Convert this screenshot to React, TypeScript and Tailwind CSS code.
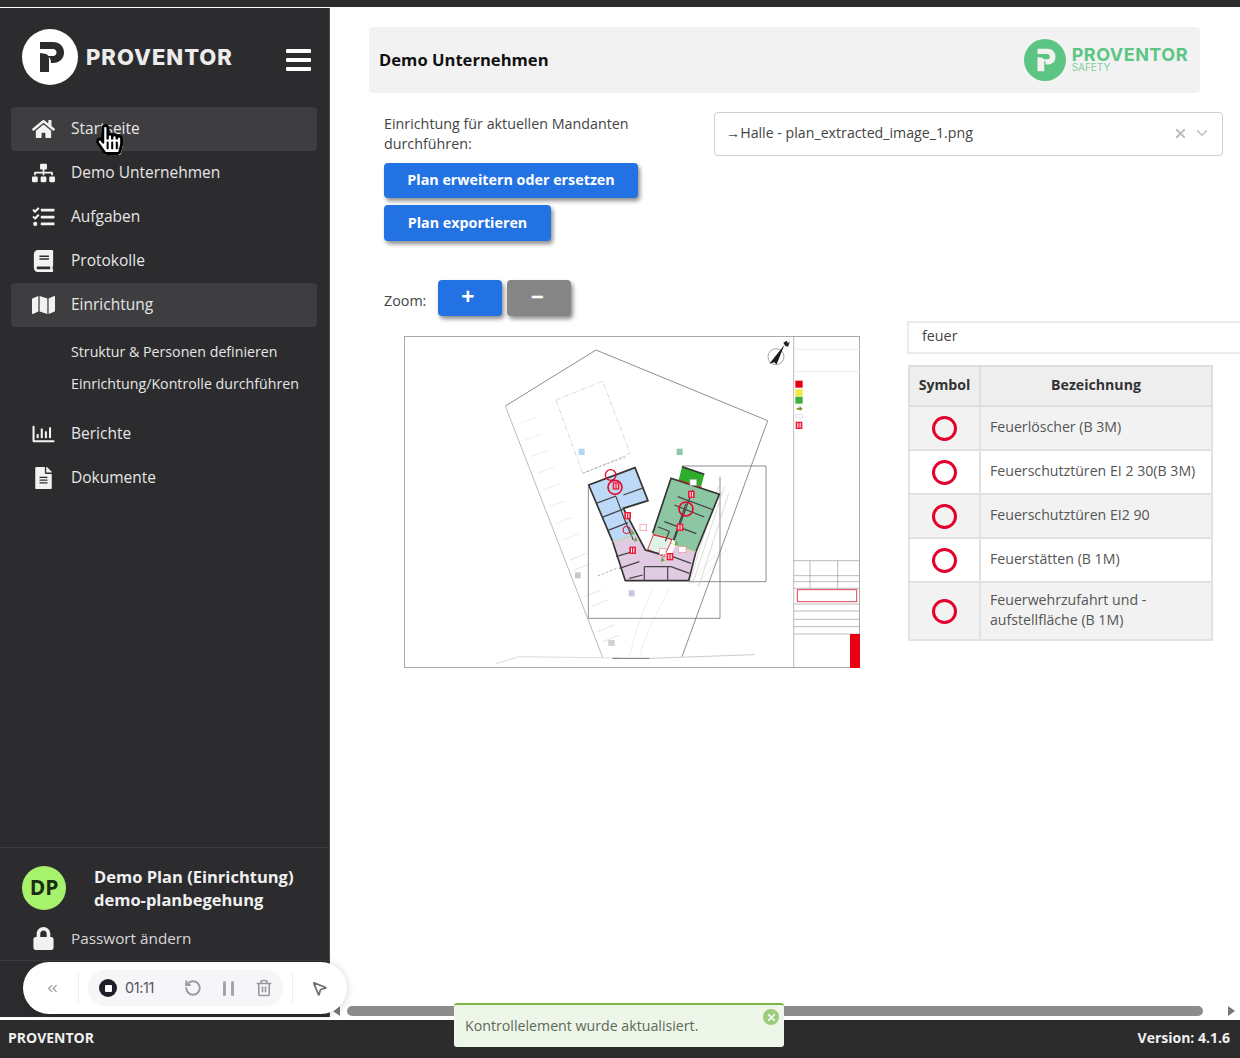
import { ChevronDown, ChevronsLeft, MousePointer2, RotateCcw, Trash2, X } from "lucide-react"
import type { IconType } from "react-icons"
import {
  FaBook,
  FaFileAlt,
  FaHandPointer,
  FaHome,
  FaLock,
  FaMap,
  FaRegChartBar,
  FaRegHandPointer,
  FaSitemap,
  FaTasks,
} from "react-icons/fa"

interface NavItem {
  label: string
  icon: IconType
  active?: boolean
}

const TOP_NAV: NavItem[] = [
  { label: "Startseite", icon: FaHome, active: true },
  { label: "Demo Unternehmen", icon: FaSitemap },
  { label: "Aufgaben", icon: FaTasks },
  { label: "Protokolle", icon: FaBook },
  { label: "Einrichtung", icon: FaMap, active: true },
]

const BOTTOM_NAV: NavItem[] = [
  { label: "Berichte", icon: FaRegChartBar },
  { label: "Dokumente", icon: FaFileAlt },
]

const ROWS = [
  "Feuerlöscher (B 3M)",
  "Feuerschutztüren EI 2 30(B 3M)",
  "Feuerschutztüren EI2 90",
  "Feuerstätten (B 1M)",
  "Feuerwehrzufahrt und - aufstellfläche (B 1M)",
]

function NavRow({ item }: { item: NavItem }) {
  const Icon = item.icon
  return (
    <div
      className={`mx-[11px] flex h-[44px] w-[306px] items-center rounded-[4px] pl-[21px] ${
        item.active ? "bg-[#3e3e40]" : ""
      }`}
    >
      <Icon className="w-[23px] text-[22px] text-[#f2f2f2]" />
      <span className="ml-[16px] text-[15.5px] text-[#e6e6e6]">{item.label}</span>
    </div>
  )
}

function LogoMark({ fg, bg, size }: { fg: string; bg: string; size: number }) {
  return (
    <svg width={size} height={size} viewBox="0 0 56 56" className="shrink-0">
      <circle cx="28" cy="28" r="28" fill={bg} />
      <path
        d="M18 13h13c6.500 0 11 4.500 11 10.500S37.500 34 31 34h-2c0-3-1-6-4-7h6c2 0 3.500-1.500 3.500-3.500S33 20 31 20H18z M18 24l6 1c2 .5 3 2.500 3 5v13h-9z"
        fill={fg}
      />
    </svg>
  )
}

function Sidebar() {
  return (
    <aside className="flex w-[330px] shrink-0 flex-col border-r border-[#4a4a4a] bg-[#2c2c2e]">
      <div className="flex h-[99px] items-center pl-[22px] pb-[1px]">
        <LogoMark fg="#2c2c2e" bg="#ffffff" size={56} />
        <span className="ml-[8px] font-['Inter',sans-serif] text-[22px] font-extrabold tracking-[1px] text-[#ececec]">
          PROVENTOR
        </span>
        <div className="ml-[53px] flex flex-col gap-[5px] pt-[5px]">
          <div className="h-[4px] w-[25px] rounded-[1px] bg-white" />
          <div className="h-[4px] w-[25px] rounded-[1px] bg-white" />
          <div className="h-[4px] w-[25px] rounded-[1px] bg-white" />
        </div>
      </div>
      {TOP_NAV.map((item) => (
        <NavRow key={item.label} item={item} />
      ))}
      <div className="mt-[9px] flex flex-col pl-[71px] text-[14.2px] text-[#e6e6e6]">
        <span className="flex h-[32px] items-center">Struktur &amp; Personen definieren</span>
        <span className="flex h-[32px] items-center">Einrichtung/Kontrolle durchführen</span>
      </div>
      <div className="mt-[12px]">
        {BOTTOM_NAV.map((item) => (
          <NavRow key={item.label} item={item} />
        ))}
      </div>
      <div className="mt-auto border-t border-[#3c3c3e]">
        <div className="flex h-[72px] items-center pl-[22px] pt-[7px]">
          <div className="flex h-[44px] w-[44px] items-center justify-center rounded-full bg-[#a6f26c] text-[21px] font-bold text-[#1c2b14]">
            DP
          </div>
          <div className="ml-[28px] text-[16.5px] leading-[23px] font-bold text-[#f0f0f0]">
            <div>Demo Plan (Einrichtung)</div>
            <div>demo-planbegehung</div>
          </div>
        </div>
        <div className="flex h-[41px] items-center border-b border-[#3c3c3e] pl-[32px] pb-[4px]">
          <FaLock className="w-[23px] text-[23px] text-[#f2f2f2]" />
          <span className="ml-[16px] text-[15.3px] text-[#d8d8d8]">Passwort ändern</span>
        </div>
        <div className="h-[56px]" />
      </div>
    </aside>
  )
}

function Tag({ x, y, r = 0 }: { x: number; y: number; r?: number }) {
  return (
    <g transform={`translate(${x} ${y}) rotate(${r})`}>
      <rect x="-10" y="-11" width="20" height="22" fill="#ee1c3a" />
      <rect x="-5" y="-7" width="3" height="14" fill="#fff" />
      <rect x="2" y="-7" width="3" height="14" fill="#fff" />
    </g>
  )
}

// Grundriss: coordinates are the reference's, scaled 3x
function PlanDrawing() {
  return (
    <svg viewBox="14 18 1368 996" className="h-[332px] w-[456px] shrink-0">
      <rect x="14" y="18" width="1368" height="996" fill="#fff" stroke="#9a9a9a" strokeWidth="5" />

      {/* faint parking rows and paths */}
      <g fill="none" stroke="#e4e4e4" strokeWidth="2">
        <path d="M360 280l50-18M378 330l50-18M396 380l50-18M414 430l50-18M432 480l50-18M450 530l50-18M470 580l50-18M490 630l50-18" />
        <path d="M512 690l50-20M525 720l50-20M555 800l50-20M575 830l50-20M595 905l50-20M610 935l50-20" stroke="#d4d4d4" />
        <path d="M690 980c20-80 40-140 70-200M720 980c20-70 50-130 90-200M870 760l90-100M890 770l90-110" />
      </g>
      <path d="M470 210l140-57 82 217-142 60z" fill="none" stroke="#c4c4c4" strokeWidth="2" strokeDasharray="14 5 3 5" />
      <path d="M550 430l130-50M595 738l60-24" fill="none" stroke="#8a8a8a" strokeWidth="2" strokeDasharray="8 5" />

      {/* plot boundary */}
      <path d="M318 228L590 60l515 212-257 708" fill="none" stroke="#777" strokeWidth="2.5" />
      <path d="M318 228l292 754" fill="none" stroke="#999" strokeWidth="2" />
      <path d="M292 1000l68-20" fill="none" stroke="#aaa" strokeWidth="2" strokeDasharray="5 3" />
      <path d="M360 980l300 4" fill="none" stroke="#bbb" strokeWidth="1.500" />
      <path d="M640 985h110" fill="none" stroke="#555" strokeWidth="2.5" />
      <path d="M750 985l315-11" fill="none" stroke="#999" strokeWidth="1.500" />

      {/* building limits */}
      <path d="M567 470v395h395V440" fill="none" stroke="#777" strokeWidth="2.5" />
      <path d="M848 408h252v347H870" fill="none" stroke="#777" strokeWidth="2.5" />
      <path d="M958 470L870 760M975 470l-95 290M988 490l-90 280" fill="none" stroke="#c8c8c8" strokeWidth="2" />

      {/* wings */}
      <path d="M640 635L568 465L707 413L746 512L672 535L738 660L810 680L830 645L890 665L868 752H678z" fill="#e0cbe2" />
      <path d="M568 465l139-52 39 99-74 23 38 85-70 15z" fill="#bcd9f7" />
      <path d="M815 445l145 48-72 172-58-20-8-17-62-18z" fill="#8cc6a3" />
      <path d="M848 410l67 23-10 37-67-20z" fill="#2fae2b" />
      <path d="M762 615l56 13-23 52-50-22z" fill="#dff2e8" stroke="#d9454f" strokeWidth="3" />

      {/* walls */}
      <g fill="none" stroke="#333" strokeWidth="5">
        <path d="M640 635L568 465l139-52 39 99-74 23 66 125 50 14" />
        <path d="M640 635l38 117h190l22-87L960 493 815 445l-55 165" />
        <path d="M848 410l67 23" />
      </g>
      <g fill="none" stroke="#444" strokeWidth="3.500">
        <path d="M590 520l60-22M608 562l62-24M624 602l62-24M650 500l26 70 26 60M672 495l62-22" />
        <path d="M835 500l108 40M825 525l90 36M795 575l96 36M775 590l35 14-12 30M860 520l-38 110M880 480l-55 150" />
        <path d="M650 680l50-15M660 715l60-20M735 710h80M735 710v42M805 710v42M815 710l55 20M820 680l55 20M690 745l40-10" />
      </g>
      <path d="M640 635l60-18M815 640l75 26" fill="none" stroke="#d7d03a" strokeWidth="3" strokeDasharray="4 3" />
      <path d="M760 612l60 17M838 450l70 22" fill="none" stroke="#c22" strokeWidth="3" />

      {/* markers */}
      <g fill="none" stroke="#e40a2c">
        <circle cx="634" cy="435" r="16" strokeWidth="4" />
        <circle cx="647" cy="472" r="21" strokeWidth="5" />
        <circle cx="682" cy="600" r="11" strokeWidth="3" />
        <circle cx="860" cy="537" r="21" strokeWidth="5" />
      </g>
      <Tag x={650} y={468} />
      <Tag x={685} y={557} />
      <Tag x={700} y={661} />
      <Tag x={876} y={493} />
      <Tag x={842} y={592} />
      <Tag x={812} y={680} />
      <g fill="#6aa83a">
        <path d="M697 598l9 14-12 4zM708 620l7 12-11 3zM788 680l8 12-12 3zM830 632l8 12-12 3z" />
      </g>
      <g fill="#fff" stroke="#f08a9a" strokeWidth="2">
        <rect x="722" y="584" width="20" height="18" />
        <rect x="780" y="656" width="20" height="18" />
        <rect x="838" y="650" width="22" height="18" />
        <rect x="872" y="448" width="20" height="18" stroke="#aaa" />
      </g>

      {/* marker squares */}
      <rect x="538" y="356" width="18" height="19" fill="#b3d4f2" />
      <rect x="832" y="356" width="18" height="19" fill="#8cc9ac" />
      <rect x="688" y="781" width="18" height="18" fill="#c6c6e2" />
      <rect x="527" y="727" width="17" height="18" fill="#c8c8c8" />
      <rect x="627" y="930" width="19" height="18" fill="#d2d2d2" />

      {/* compass */}
      <g>
        <circle cx="1130" cy="80" r="24" fill="#fff" stroke="#777" strokeWidth="2" />
        <path d="M1155 45l-45 56 14-4 8 6z" fill="#1a1a1a" />
        <path d="M1152 38l10-6 4 8 6-6-6 16-8-2z" fill="#222" />
      </g>

      {/* title block */}
      <g stroke="#9b9b9b" fill="none" strokeWidth="2">
        <path d="M1183 18v996" />
        <path d="M1183 58h199M1183 125h199" stroke="#e2e2e2" />
        <path d="M1183 692h199M1183 737h199M1183 755h199M1183 775h199" />
        <path d="M1232 692v83M1315 692v83" />
        <path d="M1183 822h199M1183 843h199M1183 868h199M1183 890h199M1183 912h199" />
      </g>
      <rect x="1194" y="779" width="178" height="36" fill="#fff" stroke="#e5435d" strokeWidth="3" />
      <rect x="1352" y="912" width="30" height="102" fill="#e60012" />
      <rect x="1188" y="152" width="22" height="21" fill="#e60012" />
      <rect x="1188" y="178" width="22" height="20" fill="#f2e93d" />
      <rect x="1188" y="200" width="22" height="21" fill="#3fae3a" />
      <path d="M1192 233h9v-5l9 8-9 8v-5h-9z" fill="#6f9f2a" />
      <rect x="1190" y="253" width="19" height="11" fill="#fff" stroke="#d8d8e4" strokeWidth="2" />
      <Tag x={1199} y={286} />
    </svg>
  )
}

function PlanTable() {
  return (
    <table className="mt-[11px] ml-[1px] w-[305px] table-fixed border-collapse text-[14.15px] text-[#555]">
      <thead>
        <tr className="h-[40px] bg-[#eeeeee] text-[#333]">
          <th className="w-[71px] border-2 border-[#dedede] pb-[2px] font-bold">Symbol</th>
          <th className="border-2 border-[#dedede] pb-[2px] font-bold">Bezeichnung</th>
        </tr>
      </thead>
      <tbody>
        {ROWS.map((row, i) => (
          <tr key={row} className={i % 2 === 0 ? "bg-[#f2f2f2]" : "bg-white"}>
            <td className="h-[44px] border-2 border-[#e2e2e2]">
              <div className="mx-auto h-[25px] w-[25px] rounded-full border-[3px] border-[#e4002b]" />
            </td>
            <td className="border-2 border-[#e2e2e2] pt-[7px] pb-[9px] pl-[9px] leading-[20px]">{row}</td>
          </tr>
        ))}
      </tbody>
    </table>
  )
}

function MainContent() {
  return (
    <main className="relative flex min-w-0 flex-1 flex-col bg-white font-['Open_Sans',sans-serif]">
      <div className="min-h-0 flex-1 overflow-hidden">
        <div className="mt-[19px] ml-[39px] flex h-[66px] w-[831px] items-center justify-between rounded-[4px] bg-[#f2f2f2] pr-[12px] pl-[10px]">
          <span className="text-[16.6px] font-bold text-[#111]">Demo Unternehmen</span>
          <div className="flex items-center">
            <LogoMark fg="#f2f2f2" bg="#5cc583" size={42} />
            <div className="ml-[6px] flex flex-col font-['Inter',sans-serif]">
              <span className="text-[18px] leading-[14px] font-bold tracking-[0.5px] text-[#5cc583]">PROVENTOR</span>
              <span className="text-[10px] leading-[10px] text-[#7fcf9e]">SAFETY</span>
            </div>
          </div>
        </div>

        <div className="mt-[19px] flex items-start">
          <div className="ml-[54px] w-[330px] shrink-0 pt-[2px]">
            <p className="w-[270px] text-[14.3px] leading-[20px] text-[#444]">
              Einrichtung für aktuellen Mandanten durchführen:
            </p>
            <div className="mt-[9px] flex flex-col items-start gap-[7px]">
              <button
                type="button"
                className="h-[35px] w-[254px] rounded-[4px] bg-[#2272e4] pb-[2px] text-[14.3px] font-bold text-white shadow-[2px_3px_4px_rgba(0,0,0,0.45)]"
              >
                Plan erweitern oder ersetzen
              </button>
              <button
                type="button"
                className="h-[36px] w-[167px] rounded-[4px] bg-[#2272e4] pb-[1px] text-[14.3px] font-bold text-white shadow-[2px_3px_4px_rgba(0,0,0,0.45)]"
              >
                Plan exportieren
              </button>
            </div>
          </div>
          <div className="flex h-[44px] w-[509px] items-center justify-between rounded-[4px] border border-[#cfcfcf] pr-[11px] pb-[2px] pl-[11px] text-[14.2px] text-[#444]">
            <span>→Halle - plan_extracted_image_1.png</span>
            <div className="flex items-center gap-[5px] text-[#bdbdbd]">
              <X size={15} strokeWidth={3} />
              <ChevronDown size={18} />
            </div>
          </div>
        </div>

        <div className="mt-[39px] ml-[54px] flex items-center">
          <span className="pt-[6px] text-[14.3px] text-[#444]">Zoom:</span>
          <button
            type="button"
            className="ml-[12px] flex h-[36px] w-[64px] items-center justify-center rounded-[4px] bg-[#2272e4] pr-[5px] pb-[3px] text-[23px] font-bold text-white shadow-[2px_3px_4px_rgba(0,0,0,0.45)]"
          >
            +
          </button>
          <button
            type="button"
            className="ml-[5px] flex h-[36px] w-[64px] items-center justify-center rounded-[4px] bg-[#858585] pr-[4px] pb-[3px] text-[23px] font-bold text-white shadow-[2px_3px_4px_rgba(0,0,0,0.45)]"
          >
            −
          </button>
        </div>

        <div className="mt-[5px] flex items-start pl-[74px]">
          <div className="mt-[15px]">
            <PlanDrawing />
          </div>
          <div className="ml-[47px] w-[333px] shrink-0">
            <div className="flex h-[33px] items-center border-2 border-r-0 border-[#eaeaea] pb-[4px] pl-[13px] text-[14.3px] text-[#444]">
              feuer
            </div>
            <PlanTable />
          </div>
        </div>
      </div>

      <div className="mb-[1px] flex h-[10px] shrink-0 items-center pr-[5px] pl-[3px]">
        <div className="h-0 w-0 border-y-[5px] border-r-[7px] border-y-transparent border-r-[#777]" />
        <div className="ml-[7px] h-[10px] w-[856px] rounded-full bg-[#8c8c8c]" />
        <div className="ml-auto h-0 w-0 border-y-[5px] border-l-[7px] border-y-transparent border-l-[#777]" />
      </div>
    </main>
  )
}

function RecorderBar() {
  return (
    <div className="absolute top-[962px] left-[23px] flex h-[52px] w-[324px] items-center rounded-full bg-white pl-[22px] font-['Inter',sans-serif] shadow-[0_1px_8px_rgba(0,0,0,0.18)]">
      <ChevronsLeft size={15} className="text-[#9a9aa5]" />
      <div className="ml-[18px] h-[30px] w-px bg-[#eeeeef]" />
      <div className="ml-[9px] flex h-[36px] w-[195px] items-center rounded-full bg-[#f6f6f9] pl-[11px]">
        <div className="flex h-[18px] w-[18px] items-center justify-center rounded-full bg-[#1e1e28]">
          <div className="h-[7px] w-[7px] rounded-[1px] bg-white" />
        </div>
        <span className="ml-[8px] text-[14.5px] tracking-[-0.4px] text-[#55555f]">01:11</span>
        <RotateCcw size={18} strokeWidth={2.5} className="ml-[30px] text-[#9a9aa5]" />
        <div className="ml-[21px] flex gap-[5px]">
          <div className="h-[15px] w-[3px] rounded-full bg-[#a4a4ae]" />
          <div className="h-[15px] w-[3px] rounded-full bg-[#a4a4ae]" />
        </div>
        <Trash2 size={18} strokeWidth={2.2} className="ml-[21px] text-[#9a9aa5]" />
      </div>
      <div className="ml-[9px] h-[30px] w-px bg-[#eeeeef]" />
      <MousePointer2 size={17} strokeWidth={2.5} className="ml-[18px] text-[#6f6f7a]" />
    </div>
  )
}

function Toast() {
  return (
    <div className="absolute top-[1003px] left-[454px] h-[44px] w-[330px] rounded-[3px] border-t-2 border-[#7ab648] bg-[#eef5e9] pt-[10px] pl-[11px] font-['Open_Sans',sans-serif] text-[14.2px] text-[#5c6b57]">
      Kontrollelement wurde aktualisiert.
      <div className="absolute top-[4px] right-[5px] flex h-[16px] w-[16px] items-center justify-center rounded-full bg-[#9ccb7c]">
        <X size={11} strokeWidth={4} className="text-[#eef5e9]" />
      </div>
    </div>
  )
}

export default function App() {
  return (
    <div className="relative flex h-[1058px] w-[1240px] flex-col overflow-hidden bg-white font-['Open_Sans',sans-serif]">
      <div className="h-[7px] shrink-0 bg-[#2c2c2c]" />
      <div className="flex min-h-0 flex-1 pt-[1px] pb-[3px]">
        <Sidebar />
        <MainContent />
      </div>
      <footer className="flex h-[38px] shrink-0 items-center justify-between bg-[#2c2c2c] pr-[10px] pb-[3px] pl-[8px] text-[14px] font-bold text-[#f0f0f0]">
        <span>PROVENTOR</span>
        <span>Version: 4.1.6</span>
      </footer>

      <RecorderBar />
      <Toast />

      {/* mouse pointer from the recording */}
      <div className="absolute top-[124px] left-[94px] text-[31px]">
        <FaHandPointer className="text-white" />
        <FaRegHandPointer className="absolute top-0 left-0 text-black" />
      </div>
    </div>
  )
}
